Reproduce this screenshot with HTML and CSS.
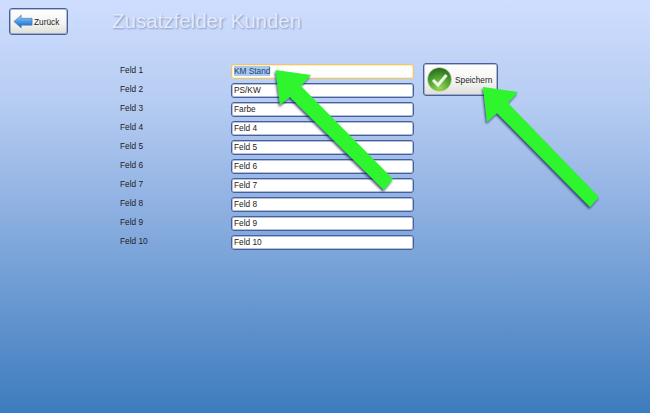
FILE: index.html
```html
<!doctype html>
<html>
  <head>
    <title>Zusatzfelder Kunden</title>
    <link rel="stylesheet" href="styles.css">
  </head>
  <body>
    <div class="header">
      <button class="btn back-btn">
        <svg class="back-icon" width="20" height="15" viewBox="0 0 22 16">
          <defs>
            <linearGradient id="backFill" x1="0" y1="0" x2="0" y2="1">
              <stop offset="0" stop-color="#a8d4f8"/>
              <stop offset="0.5" stop-color="#4a9ae4"/>
              <stop offset="1" stop-color="#1f62b8"/>
            </linearGradient>
          </defs>
          <path d="M1 8 L9 1 L9 4.5 L21 4.5 L21 12 L9 12 L9 15 Z" fill="url(#backFill)" stroke="#3a6ea8" stroke-width="0.6"/>
        </svg>
        Zurück
      </button>
      <h1 class="title">Zusatzfelder Kunden</h1>
    </div>

    <div class="content">
      <div class="fields">
        <div class="row"><label>Feld 1</label><div class="field active"><span class="selected">KM Stand</span></div></div>
        <div class="row"><label>Feld 2</label><div class="field">PS/KW</div></div>
        <div class="row"><label>Feld 3</label><div class="field">Farbe</div></div>
        <div class="row"><label>Feld 4</label><div class="field">Feld 4</div></div>
        <div class="row"><label>Feld 5</label><div class="field">Feld 5</div></div>
        <div class="row"><label>Feld 6</label><div class="field">Feld 6</div></div>
        <div class="row"><label>Feld 7</label><div class="field">Feld 7</div></div>
        <div class="row"><label>Feld 8</label><div class="field">Feld 8</div></div>
        <div class="row"><label>Feld 9</label><div class="field">Feld 9</div></div>
        <div class="row"><label>Feld 10</label><div class="field">Feld 10</div></div>
      </div>

      <button class="btn save-btn">
        <svg class="save-icon" width="25" height="25" viewBox="0 0 25 25">
          <defs>
            <radialGradient id="saveFill" cx="0.5" cy="0.85" r="0.8">
              <stop offset="0" stop-color="#98d858"/>
              <stop offset="0.55" stop-color="#52a530"/>
              <stop offset="1" stop-color="#2a6f1e"/>
            </radialGradient>
          </defs>
          <circle cx="12.5" cy="12.5" r="12" fill="url(#saveFill)" stroke="#dfe8d8" stroke-width="0.6"/>
          <path d="M6 13 L11 18 L19.5 8" fill="none" stroke="#eef5e8" stroke-width="3"/>
        </svg>
        Speichern
      </button>
    </div>

    <svg class="arrows" width="650" height="413" viewBox="0 0 650 413">
      <defs>
        <filter id="arrowShadow" x="-20%" y="-20%" width="140%" height="140%">
          <feDropShadow dx="-1" dy="2" stdDeviation="1.2" flood-color="#14224a" flood-opacity="0.75"/>
        </filter>
      </defs>
      <g fill="#2df52d" filter="url(#arrowShadow)">
        <polygon points="275.5,70 311,75 301,86 393,179 384,190 290,97 280,105"/>
        <polygon points="483,87 518,92 508,103 599,197 590,207 497,113 487,122"/>
      </g>
    </svg>
  </body>
</html>
```

FILE: styles.css
```css
body {
  margin: 0;
  width: 650px;
  height: 413px;
  overflow: hidden;
  position: relative;
  box-sizing: border-box;
  font-family: "Liberation Sans", Arial, sans-serif;
  font-size: 8.3px;
  color: #222;
  border-bottom: 1px solid #2a80d4;
  background: linear-gradient(180deg, #cfdeff 0%, #b6ccf2 25%, #8fb1e2 50%, #6596d0 75%, #3d7cbd 100%);
}

.header {
  display: flex;
  align-items: flex-start;
  padding: 8px 0 0 9px;
}

.btn {
  display: flex;
  align-items: center;
  padding: 0;
  font-family: inherit;
  font-size: 8.3px;
  color: #222;
  border: 1px solid #46609e;
  border-radius: 3px;
  box-shadow: inset 0 0 0 1px rgba(70, 96, 158, 0.4);
  background: linear-gradient(180deg, #ffffff 0%, #f3f3f1 60%, #dcdcd8 100%);
  box-sizing: border-box;
}

.back-btn {
  width: 59px;
  height: 27px;
  padding-left: 3px;
  gap: 1px;
}

.title {
  margin: 1px 0 0 44px;
  font-size: 20.5px;
  line-height: 24px;
  font-weight: normal;
  color: #e2eafc;
  text-shadow: 1px 1px 2px #8496bc;
}

.content {
  display: flex;
  align-items: flex-start;
  padding: 29px 0 0 120px;
}

.fields {
  display: flex;
  flex-direction: column;
  gap: 4px;
}

.row {
  display: flex;
  align-items: center;
  height: 15px;
}

.row label {
  width: 111px;
  margin-top: -3px;
}

.field {
  width: 183px;
  height: 15px;
  line-height: 13px;
  padding-left: 2px;
  box-sizing: border-box;
  background: #fff;
  border: 1px solid #46609e;
  border-radius: 3px;
  box-shadow: inset 0 0 0 1px rgba(70, 96, 158, 0.4);
}

.field.active {
  border-color: #f0c860;
  box-shadow: inset 0 0 0 1px rgba(240, 200, 96, 0.3);
}

.selected {
  background: #a8c8f0;
  color: #24406e;
}

.save-btn {
  width: 75px;
  height: 33px;
  margin: -1px 0 0 9px;
  padding-left: 3px;
  gap: 3px;
}

.arrows {
  position: absolute;
  left: 0;
  top: 0;
  pointer-events: none;
}
```
